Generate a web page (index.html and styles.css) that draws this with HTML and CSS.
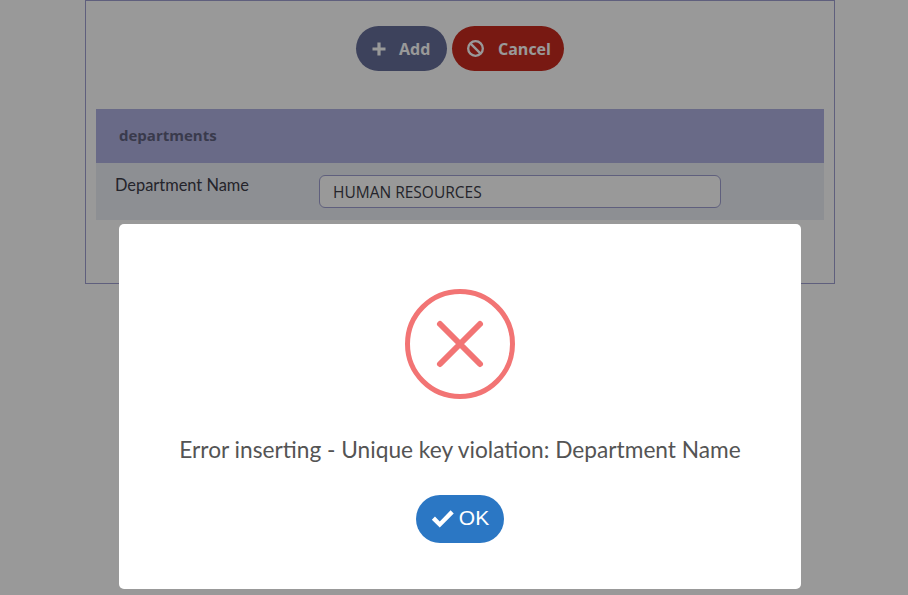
FILE: index.html
```html
<!DOCTYPE html>
<html lang="en">
<head>
    <meta charset="UTF-8">
    <meta name="viewport" content="width=device-width, initial-scale=1.0">
    <title>Departments</title>
    <link rel="stylesheet" href="styles.css">
</head>
<body>
    <div class="panel">
        <div class="toolbar">
            <button class="button button-add">
                <svg class="button-icon" width="14" height="14" viewBox="0 0 14 14"><path d="M5.4 0.5h3.2v4.9h4.9v3.2H8.6v4.9H5.4V8.6H0.5V5.4h4.9z" fill="currentColor"/></svg>
                Add
            </button>
            <button class="button button-cancel">
                <svg class="button-icon" width="17" height="17" viewBox="0 0 16 16"><circle cx="8" cy="8" r="6.9" fill="none" stroke="currentColor" stroke-width="2.2"/><path d="M3.2 3.2l9.6 9.6" stroke="currentColor" stroke-width="2.2"/></svg>
                Cancel
            </button>
        </div>
        <div class="section-title">departments</div>
        <div class="form-row">
            <label class="form-label">Department Name</label>
            <input class="form-input" type="text" value="HUMAN RESOURCES">
        </div>
    </div>

    <div class="overlay">
        <div class="modal">
            <svg class="modal-icon" width="110" height="110" viewBox="0 0 110 110">
                <circle cx="55" cy="55" r="52.5" fill="none" stroke="#f27474" stroke-width="5"/>
                <path d="M35 35l40 40M75 35l-40 40" fill="none" stroke="#f27474" stroke-width="6" stroke-linecap="round"/>
            </svg>
            <div class="modal-text">Error inserting - Unique key violation: Department Name</div>
            <button class="ok-button">
                <svg width="24" height="19" viewBox="0 0 23 18"><path d="M0.8 10.2l3-3 4.6 4.6L18.8 1.2l3 3L8.4 17.6z" fill="currentColor"/></svg>
                OK
            </button>
        </div>
    </div>
</body>
</html>
```
FILE: styles.css
```css
html, body {
    height: 100%;
    margin: 0;
    padding: 0;
    overflow: hidden;
    font-family: Lato, "Open Sans", sans-serif;
    background-color: #fff;
}

.panel {
    box-sizing: border-box;
    width: 750px;
    height: 284px;
    margin-left: 85px;
    padding: 0 10px;
    border: 1px solid #9e9fd0;
}

.toolbar {
    display: flex;
    justify-content: center;
    gap: 5px;
    padding-top: 25px;
    height: 83px;
    box-sizing: content-box;
}

.button {
    display: flex;
    align-items: center;
    height: 45px;
    padding: 0;
    border: none;
    border-radius: 23px;
    color: #fff;
    font-family: "Open Sans", sans-serif;
    font-size: 16px;
    font-weight: 700;
}

.button-add {
    width: 91px;
    padding-left: 16px;
    background-color: #666e99;
}

.button-add .button-icon {
    margin-right: 13px;
}

.button-cancel {
    width: 112px;
    padding-left: 15px;
    background-color: #c82b1e;
}

.button-icon {
    margin-right: 14px;
}

.section-title {
    height: 54px;
    padding-left: 23px;
    line-height: 53px;
    font-family: "Open Sans", sans-serif;
    font-size: 15px;
    font-weight: 700;
    color: #5f617f;
    background-color: #afb1e1;
}

.form-row {
    display: flex;
    height: 57px;
    background-color: #eceef5;
}

.form-label {
    width: 204px;
    padding: 12px 0 0 19px;
    font-size: 16.4px;
    line-height: 20px;
    color: #3c3c48;
}

.form-input {
    box-sizing: border-box;
    width: 402px;
    height: 33px;
    margin-top: 12px;
    padding: 0 13px;
    border: 1px solid #9e9fd0;
    border-radius: 6px;
    background-color: #fff;
    color: #3c3c48;
    font-family: "Open Sans", sans-serif;
    font-size: 15.5px;
}

.overlay {
    position: fixed;
    top: 0;
    left: 0;
    right: 0;
    bottom: 0;
    background-color: rgba(0, 0, 0, 0.4);
}

.modal {
    display: flex;
    flex-direction: column;
    align-items: center;
    width: 682px;
    height: 365px;
    margin: 224px 0 0 119px;
    border-radius: 5px;
    background-color: #fff;
}

.modal-icon {
    margin-top: 65px;
}

.modal-text {
    margin-top: 36px;
    font-size: 22.7px;
    line-height: 30px;
    color: #545454;
}

.ok-button {
    display: flex;
    align-items: center;
    justify-content: center;
    gap: 4px;
    width: 88px;
    height: 48px;
    margin-top: 30px;
    padding: 0 0 2px;
    border: none;
    border-radius: 24px;
    background-color: #2b77c4;
    color: #fff;
    font-family: "Liberation Sans", Arial, sans-serif;
    font-size: 21px;
}
```
